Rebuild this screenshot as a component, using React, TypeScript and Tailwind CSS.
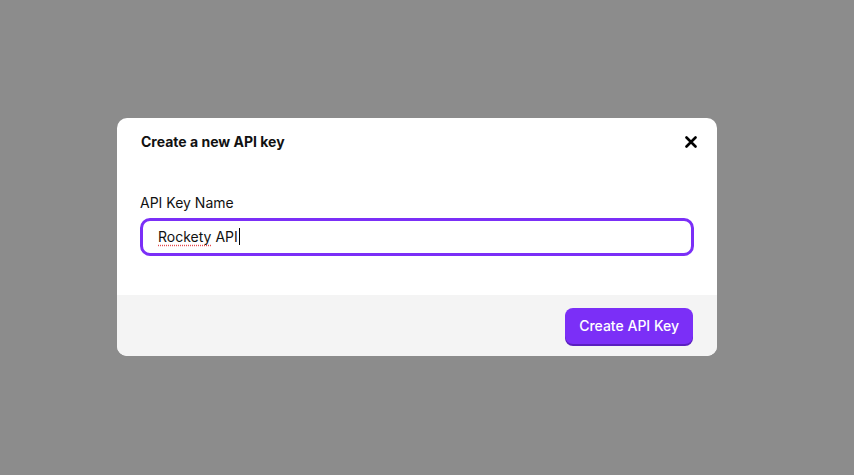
export default function App() {
  return (
    <div
      className="w-[854px] h-[475px] bg-[#8c8c8c] flex items-center justify-center"
      style={{ fontFamily: "Inter, 'Noto Sans', sans-serif" }}
    >
      <div className="w-[600px] mr-[20px] mt-[-2px] bg-white rounded-[10px] overflow-hidden">
        {/* Header */}
        <div className="flex items-center justify-between px-6 pt-[14px] h-[34px]">
          <h2 className="text-[14px] font-bold text-[#111] leading-5">Create a new API key</h2>
          <button className="w-5 h-5 flex items-center justify-center text-black -mr-[8px]">
            <svg width="12" height="12" viewBox="0 0 12 12" fill="none">
              <path d="M1.5 1.5 L10.5 10.5 M10.5 1.5 L1.5 10.5" stroke="currentColor" strokeWidth="2.6" strokeLinecap="round" />
            </svg>
          </button>
        </div>

        {/* Body */}
        <div className="px-[23px] pt-[41px] pb-[39px]">
          <label className="block text-[14px] text-[#111] leading-5 mb-[5px]">API Key Name</label>
          <div className="h-[38px] w-[554px] border-[3px] border-[#7b2ff7] rounded-[10px] flex items-center pl-[15px] text-[14px] text-[#111]">
            <span className="underline decoration-dotted decoration-[#e5484d] underline-offset-[3px]">Rockety</span>
            <span>&nbsp;API</span>
            <span className="inline-block w-px h-[17px] bg-black ml-px" />
          </div>
        </div>

        {/* Footer */}
        <div className="bg-[#f4f4f4] h-[61px] flex items-start justify-end pt-[13px] pr-6">
          <button className="h-[36px] px-[14px] bg-[#7b2ff7] text-white text-[14px] font-medium rounded-[8px] shadow-[0_2px_0_#5a1fbf]">
            Create API Key
          </button>
        </div>
      </div>
    </div>
  );
}
